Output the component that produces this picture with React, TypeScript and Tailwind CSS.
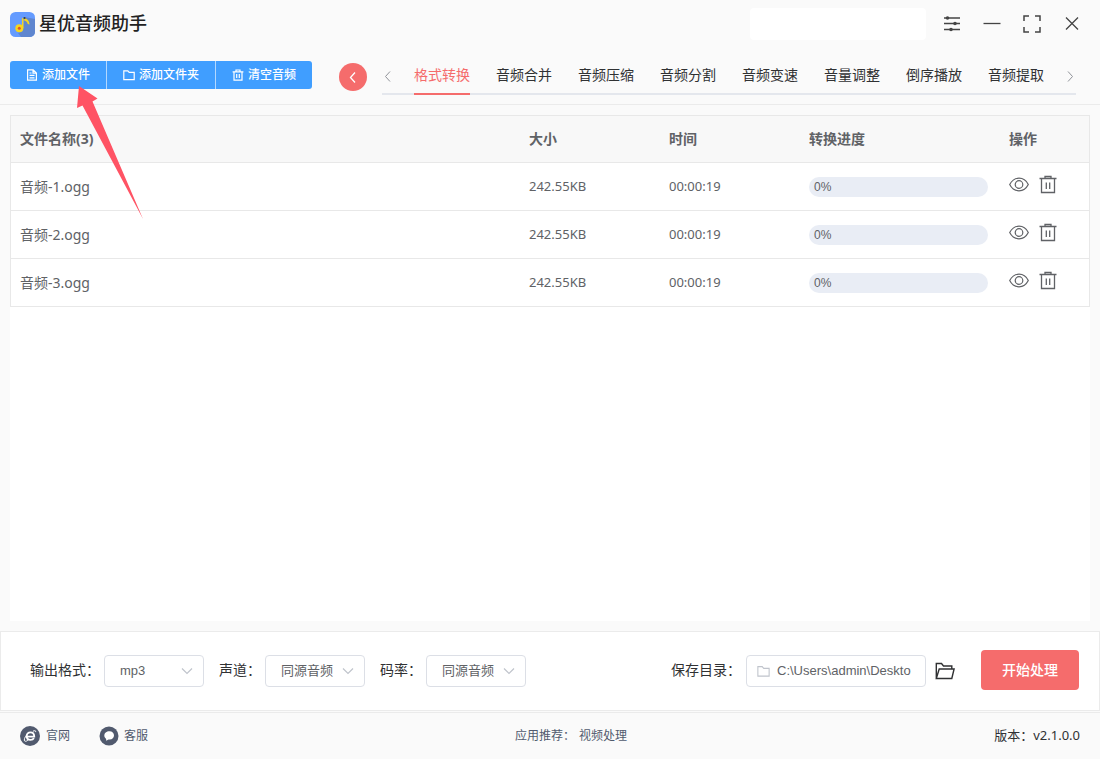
import { useState } from "react";
import type { ReactNode } from "react";

const files = [
  { name: "音频-1.ogg", size: "242.55KB", time: "00:00:19", progress: 0 },
  { name: "音频-2.ogg", size: "242.55KB", time: "00:00:19", progress: 0 },
  { name: "音频-3.ogg", size: "242.55KB", time: "00:00:19", progress: 0 },
];

const tabs = ["格式转换", "音频合并", "音频压缩", "音频分割", "音频变速", "音量调整", "倒序播放", "音频提取"];

function Logo() {
  return (
    <svg className="h-[25px] w-[25px]" viewBox="0 0 25 25" aria-hidden="true">
      <rect width="25" height="25" rx="5.5" fill="#649bff" />
      <path d="M14 5L25 7v13a5 5 0 0 1-5 5h-9l-3-4 5-2z" fill="#5f86cf" />
      <circle cx="9.3" cy="16.3" r="4" fill="#f6d51f" />
      <circle cx="9.3" cy="16.3" r="1.5" fill="#e0522d" />
      <path d="M12.700 16V6.200" stroke="#f6d51f" strokeWidth="1.5" fill="none" />
      <path d="M14.200 6.200c2.600.2 5.200 2.200 5.300 6.300l-1.800-.6c-.2-1.800-1.400-3-3.500-3.400z" fill="#f6d51f" />
      <circle cx="14.500" cy="6" r="1.100" fill="#3c3b35" />
    </svg>
  );
}

function Icon({ size = "h-3 w-3", width = 1.2, box = "0 0 12 12", children }: { size?: string; width?: number; box?: string; children: ReactNode }) {
  return (
    <svg className={`${size} shrink-0`} viewBox={box} fill="none" stroke="currentColor" strokeWidth={width} aria-hidden="true">
      {children}
    </svg>
  );
}

function Chevron({ dir, width = 1 }: { dir: "left" | "right" | "down"; width?: number }) {
  const d = { left: "M8 1.500L3.500 6.500L8 11.500", right: "M4 1.500L8.500 6.500L4 11.500", down: "M1 3.500L6 8.500L11 3.500" }[dir];
  return (
    <Icon width={width}>
      <path d={d} />
    </Icon>
  );
}

function PickBox({ id, label, options }: { id: string; label: string; options: string[] }) {
  return (
    <div className="flex items-center gap-1">
      <label htmlFor={id} className="pb-0.5 text-sm text-[#303133]">{label}</label>
      <div className="grid w-[100px] items-center">
        <select
          id={id}
          className="col-start-1 row-start-1 h-8 w-full appearance-none rounded border border-[#dcdfe6] bg-white pl-[15px] pr-6 font-['Liberation_Sans','Noto_Sans_CJK_SC',sans-serif] text-[13px] text-[#606266]"
        >
          {options.map((o) => (
            <option key={o}>{o}</option>
          ))}
        </select>
        <span className="pointer-events-none col-start-1 row-start-1 mr-[11px] justify-self-end text-[#c0c4cc]">
          <Chevron dir="down" width={1.2} />
        </span>
      </div>
    </div>
  );
}

function FileTable() {
  return (
    <table className="w-full table-fixed border-separate border-spacing-0 border-l border-r border-t border-[#e8e8e8] text-left text-sm text-[#606266]">
      <colgroup>
        <col />
        <col className="w-[140px]" />
        <col className="w-[140px]" />
        <col className="w-[200px]" />
        <col className="w-[89px]" />
      </colgroup>
      <thead>
        <tr className="h-[47px] bg-[#f8f8f8]">
          {[`文件名称(${files.length})`, "大小", "时间", "转换进度", "操作"].map((h) => (
            <th key={h} className="border-b border-[#e8e8e8] px-[9px] font-bold">{h}</th>
          ))}
        </tr>
      </thead>
      <tbody>
        {files.map((f) => (
          <tr key={f.name} className="h-12 bg-white">
            <td className="border-b border-[#e8e8e8] px-[9px]">{f.name}</td>
            <td className="border-b border-[#e8e8e8] px-[9px] text-[13px]">{f.size}</td>
            <td className="border-b border-[#e8e8e8] px-[9px] text-[13px]">{f.time}</td>
            <td className="border-b border-[#e8e8e8] pl-[9px] pr-3">
              <div className="h-5 rounded-full bg-[#e9edf5] px-[5px] font-['Liberation_Sans',sans-serif] text-xs leading-5">{f.progress}%</div>
            </td>
            <td className="border-b border-[#e8e8e8] px-[9px] pb-1">
              <div className="flex items-center gap-[9px]">
                <button type="button" aria-label={`预览 ${f.name}`}>
                  <Icon size="h-5 w-5" box="0 0 20 20">
                    <path d="M.7 9.500C3 5 6.200 3.200 10 3.200S17 5 19.300 9.500C17 14 13.800 15.800 10 15.800S3 14 .7 9.500z" />
                    <circle cx="10" cy="9.500" r="3.800" />
                  </Icon>
                </button>
                <button type="button" aria-label={`删除 ${f.name}`}>
                  <Icon size="h-5 w-5" box="0 0 20 20" width={1.3}>
                    <path d="M1.500 3.500h17M3.500 3.500v14h13v-14M7 3.500V1.500h6v2M8.300 7.500v6.500M11.700 7.500v6.500" />
                  </Icon>
                </button>
              </div>
            </td>
          </tr>
        ))}
      </tbody>
    </table>
  );
}

export default function App() {
  const [active, setActive] = useState(0);
  return (
    <div lang="zh-CN" className="relative flex min-h-screen flex-col bg-[#fafafa] font-['Noto_Sans','Noto_Sans_CJK_SC',sans-serif] text-[#303133]">
      <header className="border-b border-[#ebebeb]">
        <div className="flex h-12 items-center justify-between pl-[10px] pr-[18px]">
          <div className="flex items-center gap-1">
            <Logo />
            <h1 className="pb-0.5 text-lg font-medium leading-6 text-[#222]">星优音频助手</h1>
          </div>
          <div className="flex items-center text-[#444]">
            <div className="mr-4 h-8 w-44 rounded bg-white" />
            <div className="flex items-center gap-5">
              <button type="button" aria-label="设置">
                <Icon size="h-5 w-5" box="0 0 20 20" width={1.3}>
                  <path d="M2 4h16M2 9.500h16M2 15.500h16" />
                  <g fill="currentColor" stroke="none">
                    <circle cx="5.500" cy="4" r="1.800" />
                    <circle cx="13" cy="9.500" r="1.800" />
                    <circle cx="9" cy="15.500" r="1.800" />
                  </g>
                </Icon>
              </button>
              <button type="button" aria-label="最小化">
                <Icon size="h-5 w-5" box="0 0 20 20" width={1.3}>
                  <path d="M1.500 9.500h17" />
                </Icon>
              </button>
              <button type="button" aria-label="最大化">
                <Icon size="h-5 w-5" box="0 0 20 20" width={1.500}>
                  <path d="M2 7V2h5M13 2h5v5M18 13v5h-5M7 18H2v-5" />
                </Icon>
              </button>
              <button type="button" aria-label="关闭">
                <Icon size="h-5 w-5" box="0 0 20 20" width={1.3}>
                  <path d="M4 3.500L16 15.500M16 3.500L4 15.500" />
                </Icon>
              </button>
            </div>
          </div>
        </div>
        <div className="flex h-14 items-start pl-[10px] pr-6">
          <div className="mt-[13px] flex h-7 shrink-0 divide-x divide-[#b3d8ff] overflow-hidden rounded-[3px] bg-[#409eff] text-xs font-medium text-white">
            <button type="button" className="flex items-center gap-1 px-4">
              <Icon>
                <path d="M1.600.8h5.600l3.200 3.200v7.200H1.600zM7 .8v3.400h3.400M3.500 4h2M3.500 6.400h5M3.500 8.800h5" />
              </Icon>
              添加文件
            </button>
            <button type="button" className="flex items-center gap-1 px-4">
              <Icon>
                <path d="M.8 1.800h4l1.400 1.600h5v7.200H.8z" />
              </Icon>
              添加文件夹
            </button>
            <button type="button" className="flex items-center gap-1 px-4">
              <Icon>
                <path d="M.6 2.800h10.800M2 2.800v8.400h8V2.800M4 2.800V1h4v1.800M4.700 5v4M7.300 5v4" />
              </Icon>
              清空音频
            </button>
          </div>
          <button type="button" aria-label="返回" className="ml-[27px] mt-[15px] flex h-7 w-7 shrink-0 items-center justify-center rounded-full bg-[#f56c6c] text-white">
            <Chevron dir="left" width={1.3} />
          </button>
          <nav className="ml-[15px] mt-[7px] flex h-10 min-w-0 flex-1 items-stretch justify-between border-b-2 border-[#e4e7ed]">
            <button type="button" aria-label="向左" className="pt-1 text-[#909399]">
              <Chevron dir="left" />
            </button>
            <div className="-mb-0.5 flex gap-[26px]">
              {tabs.map((t, i) => (
                <button
                  key={t}
                  type="button"
                  onClick={() => setActive(i)}
                  className={`whitespace-nowrap border-b-2 pt-0.5 text-sm ${i === active ? "border-[#f56c6c] text-[#f56c6c]" : "border-transparent"}`}
                >
                  {t}
                </button>
              ))}
            </div>
            <button type="button" aria-label="向右" className="pt-1 text-[#909399]">
              <Chevron dir="right" />
            </button>
          </nav>
        </div>
      </header>

      <main className="m-[10px] flex-1 bg-white">
        <FileTable />
      </main>

      <section className="mb-px flex h-20 items-center justify-between border border-[#ebebeb] bg-white pl-[29px] pr-5">
        <div className="flex gap-[15px]">
          <PickBox id="format" label="输出格式：" options={["mp3", "wav", "ogg"]} />
          <PickBox id="channel" label="声道：" options={["同源音频"]} />
          <PickBox id="bitrate" label="码率：" options={["同源音频"]} />
        </div>
        <div className="flex items-center">
          <label htmlFor="dir" className="mr-[5px] pb-0.5 text-sm">保存目录：</label>
          <div className="flex h-8 w-[180px] items-center gap-[7px] rounded border border-[#dcdfe6] bg-white px-[10px]">
            <span className="text-[#c0c4cc]">
              <Icon size="h-[13px] w-[13px]" width={1}>
                <path d="M.8 1.500h4l1.400 1.600h5v7.200H.8z" />
              </Icon>
            </span>
            <input
              id="dir"
              type="text"
              defaultValue="C:\Users\admin\Deskto"
              className="min-w-0 flex-1 font-['Liberation_Sans',sans-serif] text-[13px] text-[#606266] outline-none"
            />
          </div>
          <button type="button" aria-label="打开目录" className="ml-[9px]">
            <Icon size="h-5 w-5" box="0 0 20 20" width={1.4}>
              <path d="M1.300 17.500V2.500h5.200l2 2.500h8.300v3M1.300 17.500L4.200 8h14.900l-2.300 9.500z" />
            </Icon>
          </button>
          <button type="button" className="mb-0.5 ml-[26px] h-10 w-[98px] rounded bg-[#f56c6c] text-sm font-medium text-white">
            开始处理
          </button>
        </div>
      </section>

      <footer className="flex h-12 items-center justify-between border-b border-t border-b-white border-t-[#ebebeb] px-5 text-xs text-[#515a6e]">
        <div className="flex gap-[29px]">
          <a href="#site" className="flex items-center gap-[6px]">
            <svg className="h-5 w-5" viewBox="0 0 20 20" fill="none" aria-hidden="true">
              <circle cx="10" cy="10" r="10" fill="#515a6e" />
              <path d="M6.800 10.600h7.400c0-2.600-1.500-4.200-3.700-4.200S6.700 8.100 6.700 10.200s1.600 3.700 3.800 3.700c1.600 0 2.800-.7 3.400-1.800" stroke="#fff" strokeWidth="1.900" />
              <path d="M13 5.200c1.800-.9 3-.7 2.700.9M6.800 8.800c-2.200 2.500-3.200 5.600-2 6.300.8.500 2.200-.1 3.200-.9" stroke="#fff" strokeWidth="1" />
            </svg>
            官网
          </a>
          <a href="#service" className="flex items-center gap-[5px]">
            <svg className="h-5 w-5" viewBox="0 0 20 20" aria-hidden="true">
              <circle cx="10" cy="10" r="9.500" fill="#515a6e" />
              <path d="M10.500 5.300c2.700 0 4.500 1.800 4.500 4 0 2.300-1.700 4.200-4.300 4.300l-1.200 0-2.300 1.200-.1-1.900C5.900 12 5.300 11 5.300 9.600c0-2.500 2.200-4.300 5.200-4.300z" fill="#fff" />
            </svg>
            客服
          </a>
        </div>
        <div className="flex gap-1">
          <span>应用推荐：</span>
          <a href="#video">视频处理</a>
        </div>
        <span className="text-[13px] text-[#303133]">版本：v2.1.0.0</span>
      </footer>

      <svg className="pointer-events-none absolute left-[76px] top-[86px] h-[134px] w-[68px]" viewBox="0 0 68 134" aria-hidden="true">
        <path d="M3 0L21.500 12.500L16.500 15.500L67 133L6.500 19.500L1 22z" fill="#ff5364" />
      </svg>
    </div>
  );
}
